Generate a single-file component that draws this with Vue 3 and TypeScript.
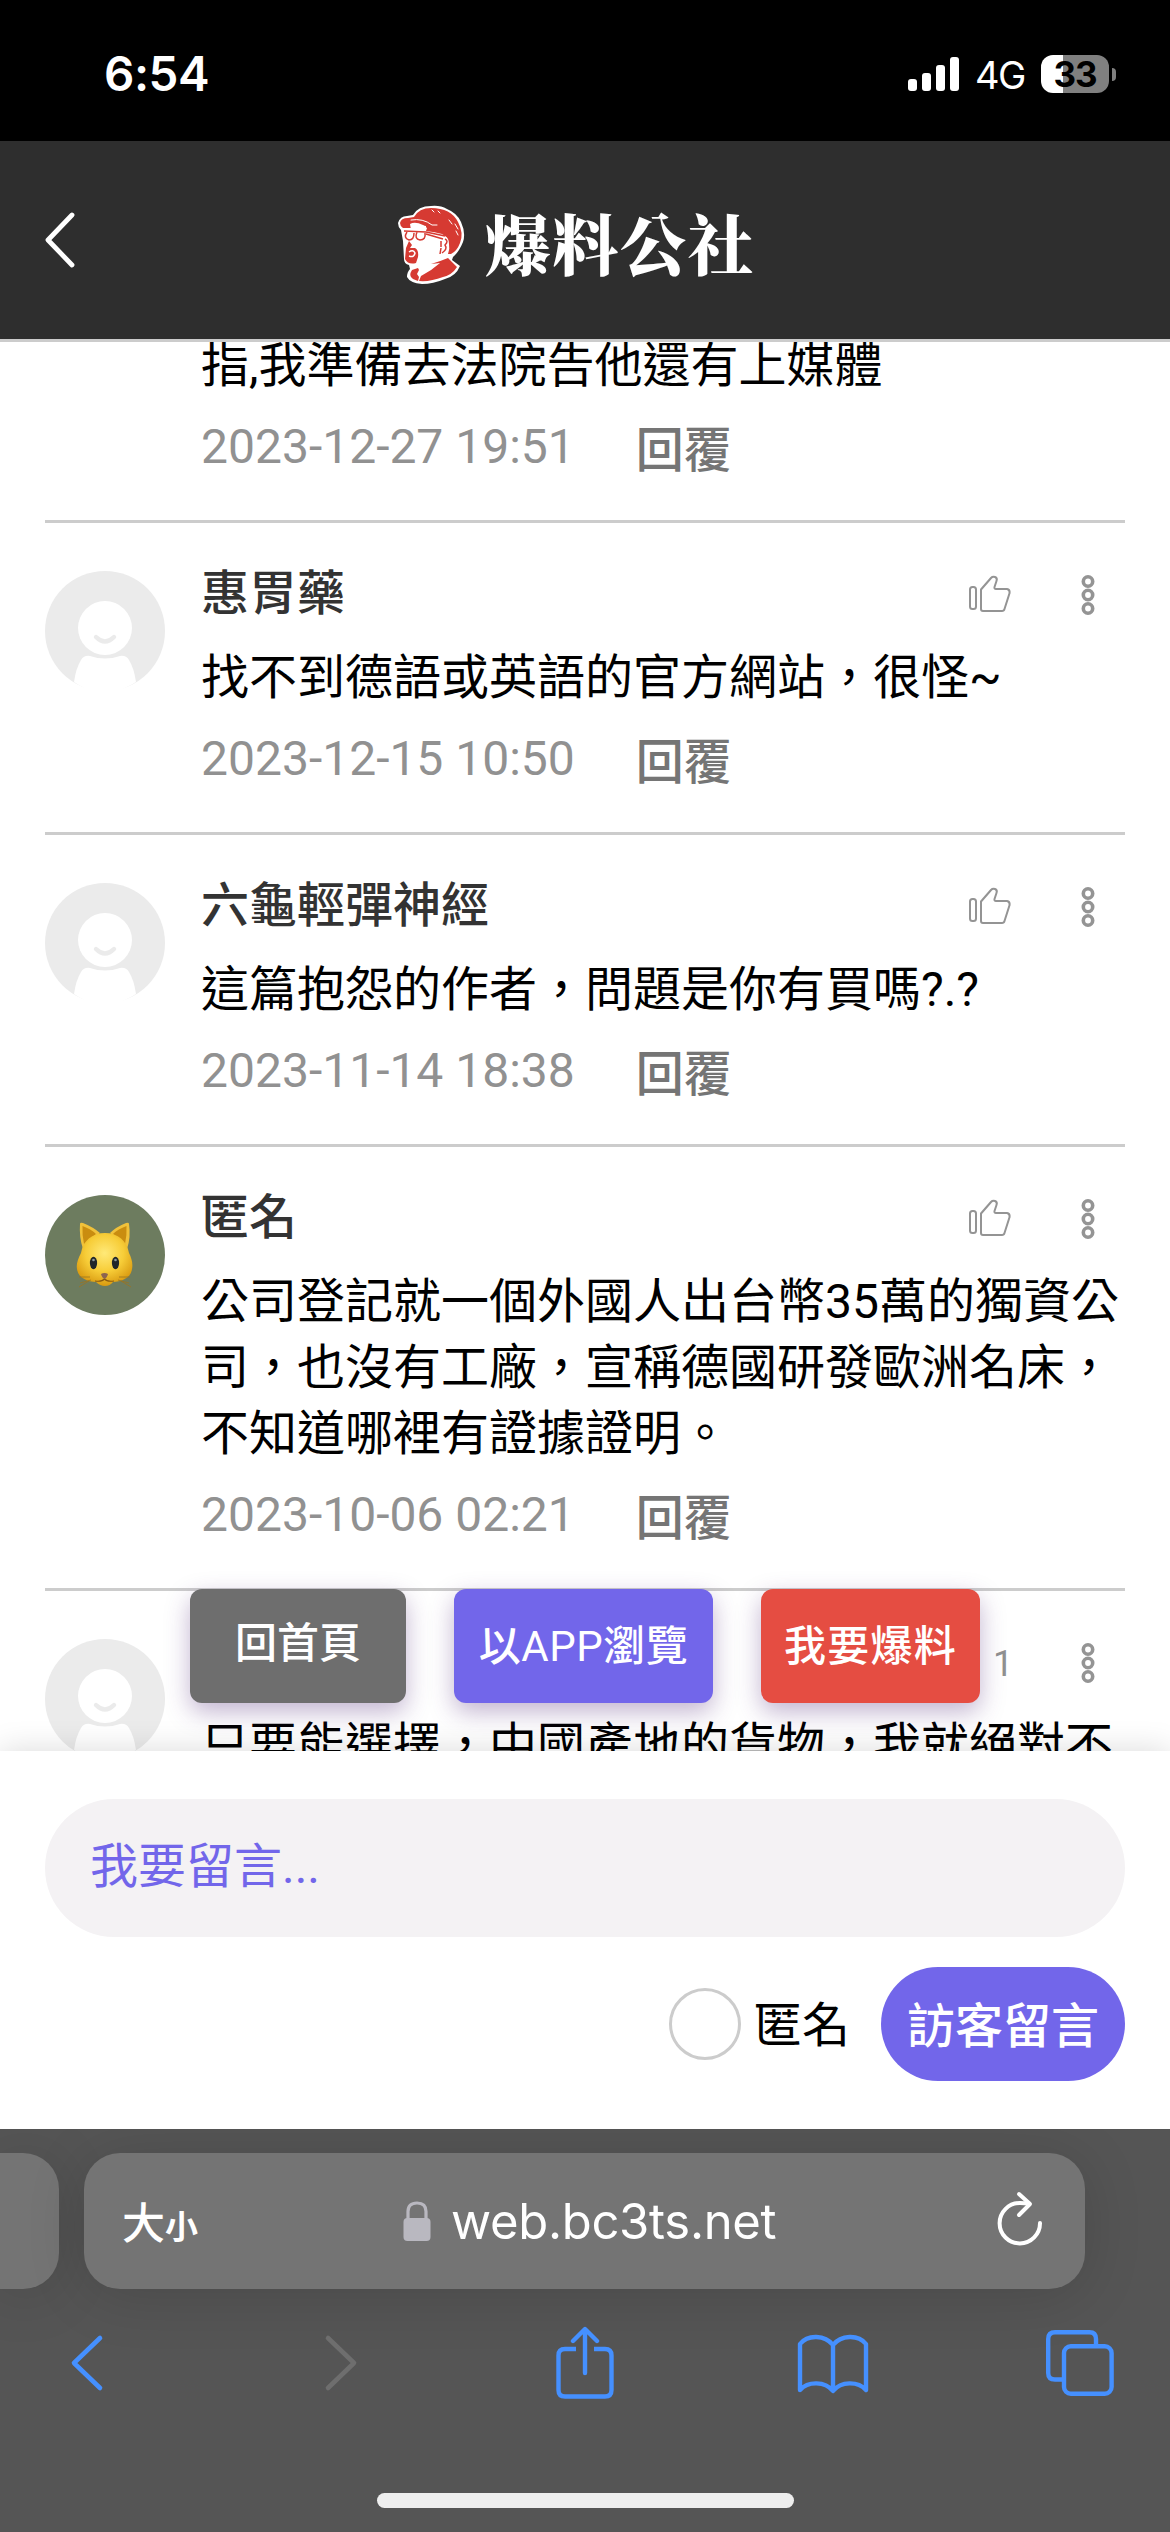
<script setup lang="ts">
interface Comment {
  id: number
  name?: string
  avatar?: 'default' | 'cat'
  text: string
  date: string
  likes?: number
}

const comments: Comment[] = [
  { id: 1, text: '指,我準備去法院告他還有上媒體', date: '2023-12-27 19:51' },
  { id: 2, name: '惠胃藥', avatar: 'default', text: '找不到德語或英語的官方網站，很怪~', date: '2023-12-15 10:50' },
  { id: 3, name: '六龜輕彈神經', avatar: 'default', text: '這篇抱怨的作者，問題是你有買嗎?.?', date: '2023-11-14 18:38' },
  { id: 4, name: '匿名', avatar: 'cat', text: '公司登記就一個外國人出台幣35萬的獨資公司，也沒有工廠，宣稱德國研發歐洲名床，不知道哪裡有證據證明。', date: '2023-10-06 02:21' },
  { id: 5, name: '', avatar: 'default', text: '只要能選擇，中國產地的貨物，我就絕對不', date: '', likes: 1 },
]

const signalBars = [12, 18, 26, 34]
</script>

<template>
  <div class="screen">
    <div class="status">
      <span class="time">6:54</span>
      <div class="signal">
        <i v-for="h in signalBars" :key="h" :style="{ height: h + 'px' }"></i>
      </div>
      <span class="network">4G</span>
      <div class="battery"><span>33</span></div>
      <i class="battery-tip"></i>
    </div>

    <header class="header">
      <svg class="back" width="34" height="58" viewBox="0 0 34 58">
        <path d="M29 4 L5 29 L29 54" fill="none" stroke="#fff" stroke-width="4.8" stroke-linecap="round" stroke-linejoin="round" />
      </svg>
      <div class="brand">
        <svg width="72" height="84" viewBox="0 0 72 84">
          <path d="M3 20Q5 13 12 13L18 12Q23 3 36 3Q45 2 52 6Q62 10 66 19Q71 30 68 39Q64 49 58 54L57 57L65 63Q61 73 50 76Q38 81 27 81Q15 80 12 74Q12 69 15 66L14 62Q9 61 9 56L8 38L6 27Q3 24 3 20Z" fill="#fff" />
          <path d="M5 20Q6 15 13 15L19 14Q24 5 36 5Q56 5 63 19Q69 30 65 40Q62 48 56 51L53 51Q55 46 54 41Q54 35 50 33L47 31Q40 29 31 28L31 23Q20 20 16 25L8 25Q5 23 5 20Z" fill="#d63a32" />
          <path d="M16 17Q28 15 37 22L42 22M37 7L39 9M43 8L45 10M60 21L63 26M61 28L63 32M54 17L57 21" fill="none" stroke="#fff" stroke-width="1" stroke-linecap="round" />
          <path d="M15 21Q20 18 28 22L32 25L31 28L16 27Z" fill="#fff" />
          <path d="M9 28L31 29L50 33M12 29Q8 35 14 37Q19 37 19 30M22 29Q19 36 25 37Q31 37 30 30M31 31L48 36" fill="none" stroke="#d63a32" stroke-width="1.5" />
          <path d="M14 38L11 45L10 56Q13 62 21 60L23 54Q24 47 20 45L15 45L17 42Z" fill="#d63a32" />
          <path d="M14 49Q18 46 20 50Q19 55 14 53" fill="none" stroke="#fff" stroke-width="1.5" />
          <path d="M50 36Q54 38 50 42Q53 46 47 50M46 38V44M46 45L45 51" fill="none" stroke="#d63a32" stroke-width="1.5" />
          <path d="M53 55L62 64Q57 72 48 74Q35 79 24 78L26 73Q36 68 45 60L36 61Q46 58 53 55ZM23 65L17 67Q13 73 18 76L23 78L24 74L22 71L24 67Z" fill="#d63a32" />
        </svg>
        <span class="brand-name">爆料公社</span>
      </div>
    </header>

    <main class="thread">
      <div class="list">
        <article v-for="c in comments" :key="c.id" class="item" :class="{ clipped: !c.avatar }">
          <svg v-if="c.avatar === 'default'" class="avatar" width="120" height="120" viewBox="0 0 120 120">
            <circle cx="60" cy="60" r="60" fill="#ebebeb" />
            <circle cx="60" cy="57" r="27" fill="#fff" />
            <path d="M51 66Q60 75 69 66" fill="none" stroke="#ebebeb" stroke-width="4.4" stroke-linecap="round" />
            <path d="M29 111Q31 97 36 89Q39 84 45 85Q60 90 75 85Q81 84 84 89Q89 97 91 111Q76 121 60 121Q43 121 29 111Z" fill="#fff" />
          </svg>
          <svg v-else-if="c.avatar === 'cat'" class="avatar" width="120" height="120" viewBox="0 0 120 120">
            <defs>
              <radialGradient id="fur" cx="50%" cy="38%" r="62%">
                <stop offset="0" stop-color="#ffe978" />
                <stop offset=".55" stop-color="#f7cd38" />
                <stop offset="1" stop-color="#d99a10" />
              </radialGradient>
            </defs>
            <circle cx="60" cy="60" r="60" fill="#6d7c5f" />
            <path d="M35 29Q35 27 38 28Q48 32 55 38L38 54Q34 42 35 29ZM84 29Q84 27 81 28Q71 32 65 38L82 54Q86 42 84 29Z" fill="#f0c13a" />
            <path d="M37.500 31Q46 34 51 39L39 49Q37 40 37.500 31ZM81.500 31Q73 34 68 39L80 49Q82 40 81.500 31Z" fill="#c98d10" />
            <path d="M60 38C73 38 82 46 84 58C87 64 88 69 87 74C86 83 76 87 68 87Q65 91 60 91Q55 91 51 87C43 87 33 83 32 74C31 69 33 64 36 58C38 46 47 38 60 38Z" fill="url(#fur)" />
            <ellipse cx="48.500" cy="68" rx="3.600" ry="6.200" fill="#20262a" />
            <ellipse cx="70.500" cy="68" rx="3.600" ry="6.200" fill="#20262a" />
            <circle cx="48.500" cy="65" r="1.300" fill="#8b979d" />
            <circle cx="70.500" cy="65" r="1.300" fill="#8b979d" />
            <path d="M56 79Q59.500 77 63 79Q62 83 59.500 84Q57 83 56 79Z" fill="#8c6450" />
            <path d="M59.500 84Q57 87 50 86M59.500 84Q62 87 69 86" fill="none" stroke="#8a5a10" stroke-width="1.200" />
            <path d="M45 82L34 82M46 85L35 88M74 82L85 82M73 85L84 88M44 86L34 92M76 86L86 92" stroke="#9b7420" stroke-width=".8" />
          </svg>

          <div class="body">
            <div v-if="c.avatar" class="head">
              <span class="name">{{ c.name }}</span>
              <span v-if="c.likes" class="likes">{{ c.likes }}</span>
              <svg v-else class="thumb" width="44" height="40" viewBox="0 0 44 40">
                <rect x="2" y="13" width="6" height="22" rx="2.500" fill="none" stroke="#949494" stroke-width="2" />
                <path d="M13 15.500L23 4Q24.500 2.400 27 3Q29.600 4 28.500 7L26.500 13Q26 15 28 15L39 15Q42 15.500 41.600 19L36.500 35Q36 37 34 37L15 37Q13 37 13 35Z" fill="none" stroke="#949494" stroke-width="2" stroke-linejoin="round" />
              </svg>
              <svg class="dots" width="14" height="42" viewBox="0 0 14 42">
                <g fill="none" stroke="#949494" stroke-width="3.600">
                  <circle cx="7" cy="7.500" r="4.700" />
                  <circle cx="7" cy="21" r="4.700" />
                  <circle cx="7" cy="34.500" r="4.700" />
                </g>
              </svg>
            </div>
            <p class="text">{{ c.text }}</p>
            <div v-if="c.date" class="meta">
              <time>{{ c.date }}</time>
              <span class="reply">回覆</span>
            </div>
          </div>
        </article>
      </div>

      <nav class="floating">
        <button class="fab home">回首頁</button>
        <button class="fab app">以<span class="latin">APP</span>瀏覽</button>
        <button class="fab report">我要爆料</button>
      </nav>
    </main>

    <section class="composer">
      <div class="field">我要留言...</div>
      <div class="actions">
        <i class="radio"></i>
        <span class="anon">匿名</span>
        <button class="send">訪客留言</button>
      </div>
    </section>

    <footer class="browser">
      <div class="address-row">
        <div class="prev-tab"></div>
        <div class="address">
          <span class="size"><b>大</b><small>小</small></span>
          <svg class="lock" width="28" height="40" viewBox="0 0 28 40">
            <path d="M5 19V10.500Q5 2 14 2Q23 2 23 10.500V19" fill="none" stroke="#b9b8c0" stroke-width="3.200" />
            <rect x="0.500" y="17" width="27" height="23" rx="4" fill="#b9b8c0" />
          </svg>
          <span class="url">web.bc3ts.net</span>
          <svg class="reload" width="46" height="56" viewBox="0 0 46 56">
            <path d="M32 12.500L23 12A20.200 20.200 0 1 0 43 32" fill="none" stroke="#fff" stroke-width="4" stroke-linecap="round" />
            <path d="M22 3L33 13L22 24" fill="none" stroke="#fff" stroke-width="4" stroke-linecap="round" stroke-linejoin="round" />
          </svg>
        </div>
      </div>
      <div class="tools">
        <svg width="34" height="58" viewBox="0 0 34 58">
          <path d="M30 4 L4 29 L30 54" fill="none" stroke="#4590ff" stroke-width="4.600" stroke-linecap="round" stroke-linejoin="round" />
        </svg>
        <svg class="forward" width="34" height="58" viewBox="0 0 34 58">
          <path d="M4 4 L30 29 L4 54" fill="none" stroke="#6e6e6e" stroke-width="4.600" stroke-linecap="round" stroke-linejoin="round" />
        </svg>
        <svg class="share" width="58" height="74" viewBox="0 0 58 74">
          <g fill="none" stroke="#4590ff" stroke-width="4.400" stroke-linecap="round" stroke-linejoin="round">
            <path d="M20 23H9Q2.500 23 2.500 29.500V64Q2.500 70.500 9 70.500H49Q55.500 70.500 55.500 64V29.500Q55.500 23 49 23H38" stroke-linecap="butt" />
            <path d="M29 47V4M17 15L29 3L41 15" />
          </g>
        </svg>
        <svg class="bookmarks" width="72" height="62" viewBox="0 0 72 62">
          <path d="M36 13C28 3 11 2 3 12V58C11 49 28 49 36 59C44 49 61 49 69 58V12C61 2 44 3 36 13V58" fill="none" stroke="#4590ff" stroke-width="4.400" stroke-linecap="round" stroke-linejoin="round" />
        </svg>
        <svg class="tabs" width="68" height="66" viewBox="0 0 68 66">
          <g fill="none" stroke="#4590ff" stroke-width="4.400">
            <path d="M50 14V9Q50 2.200 43.500 2.200H9Q2.200 2.200 2.200 9V43Q2.200 49.500 9 49.500H16" />
            <rect x="18" y="16.300" width="47.600" height="47.500" rx="6.800" />
          </g>
        </svg>
      </div>
      <div class="home-indicator"></div>
    </footer>
  </div>
</template>

<style>
body {
  margin: 0;
  background: #fff;
}
</style>

<style scoped>
.screen {
  width: 1170px;
  height: 2532px;
  overflow: hidden;
  display: flex;
  flex-direction: column;
  font-family: Roboto, "Noto Sans CJK TC", sans-serif;
  font-size: 48px;
  line-height: 66px;
  color: #000;
  background: #fff;
}
svg {
  display: block;
  flex: none;
}
button {
  border: 0;
  padding: 0;
  font: inherit;
  color: #fff;
}

/* status bar */
.status {
  box-sizing: border-box;
  flex: none;
  height: 141px;
  padding: 7px 54px 0 104px;
  display: flex;
  align-items: center;
  background: #000;
  color: #fff;
  font-family: Inter, sans-serif;
}
.time {
  font-size: 47.500px;
  font-weight: 600;
  letter-spacing: -0.5px;
}
.signal {
  margin-left: auto;
  display: flex;
  align-items: flex-end;
  gap: 5px;
  height: 34px;
}
.signal i {
  width: 9px;
  border-radius: 3px;
  background: #fff;
}
.network {
  margin-left: 16px;
  width: 50px;
  padding-top: 2px;
  font-size: 38px;
  letter-spacing: -1.5px;
  white-space: nowrap;
}
.battery {
  margin-left: 16px;
  width: 68px;
  height: 38px;
  border-radius: 12px;
  background: linear-gradient(90deg, #fff 22px, #808080 22px);
  color: #000;
  font-size: 35px;
  line-height: 38px;
  font-weight: 700;
  letter-spacing: -1px;
  text-align: center;
}
.battery-tip {
  margin-left: 3px;
  width: 4px;
  height: 13px;
  border-radius: 0 6px 6px 0;
  background: #808080;
}

/* site header */
.header {
  flex: none;
  height: 198px;
  border-bottom: 3px solid #ccc;
  display: flex;
  align-items: center;
  padding-left: 43px;
  background: #2e2e2e;
  color: #fff;
}
.brand {
  margin-left: 318px;
  padding-top: 9px;
  display: flex;
  align-items: center;
}
.brand-name {
  margin: -6px 0 0 18px;
  font-family: "Noto Serif CJK TC", "Noto Sans CJK TC", serif;
  font-weight: 900;
  font-size: 66px;
  line-height: 84px;
  letter-spacing: 1.500px;
}

/* comments */
.thread {
  position: relative;
  flex: none;
  height: 1409px;
  overflow: hidden;
}
.list {
  padding: 0 45px;
}
.item {
  display: flex;
  gap: 36px;
  padding: 38px 0 40px;
  border-bottom: 3px solid #ccc;
}
.item.clipped {
  margin-top: -9px;
  padding-top: 0;
  padding-left: 156px;
}
.avatar {
  margin-top: 10px;
}
.body {
  flex: 1;
  min-width: 0;
}
.head {
  height: 66px;
  margin-bottom: 18px;
  display: flex;
  align-items: center;
}
.name {
  flex: 1;
  font-weight: 500;
  color: #333;
}
.likes {
  width: 88px;
  font-size: 36px;
  padding-top: 4px;
  color: #919191;
}
.thumb {
  margin: 0 69px 0 0;
}
.dots {
  margin: 2px 30px 0 0;
}
.text {
  margin: 0;
}
.meta {
  margin-top: 15px;
  height: 66px;
  display: flex;
  color: #919191;
}
.reply {
  margin-left: 61px;
  padding-top: 4px;
  font-weight: 500;
  color: #757575;
}

/* floating shortcuts over the thread */
.floating {
  position: absolute;
  left: 190px;
  bottom: 48px;
  display: flex;
  gap: 48px;
}
.fab {
  box-sizing: border-box;
  height: 114px;
  padding-top: 2px;
  border-radius: 12px;
  font-size: 42px;
  font-weight: 500;
  letter-spacing: 1.260px;
  white-space: nowrap;
  box-shadow: 0 9px 24px rgba(80, 40, 120, 0.35);
}
.home {
  width: 216px;
  padding: 0 0 4px;
  letter-spacing: 0;
  background: #6e6e6e;
}
.app {
  width: 259px;
  letter-spacing: 0.5px;
  background: #7266ea;
}
.latin {
  font-weight: 400;
}
.report {
  width: 219px;
  background: #e54d42;
}

/* composer */
.composer {
  position: relative;
  box-sizing: border-box;
  flex: none;
  height: 378px;
  padding: 48px 45px 0;
  background: #fff;
  box-shadow: 0 0 30px rgba(0, 0, 0, 0.15);
}
.field {
  box-sizing: border-box;
  height: 138px;
  border-radius: 69px;
  padding: 35px 45px;
  background: #f4f2f4;
  color: #7266ea;
}
.actions {
  margin-top: 30px;
  display: flex;
  align-items: center;
  justify-content: flex-end;
}
.radio {
  box-sizing: border-box;
  width: 72px;
  height: 72px;
  border: 3px solid #ccc;
  border-radius: 50%;
}
.anon {
  margin: 4px 31px 0 13px;
}
.send {
  width: 244px;
  height: 114px;
  padding-top: 5px;
  border-radius: 57px;
  font-weight: 500;
  background: #7266ea;
}

/* browser chrome */
.browser {
  position: relative;
  box-sizing: border-box;
  flex: 1;
  padding-top: 24px;
  display: flex;
  flex-direction: column;
  align-items: center;
  overflow: hidden;
  background: #555;
}
.address-row {
  align-self: stretch;
  display: flex;
  gap: 25px;
}
.prev-tab {
  width: 59px;
  height: 136px;
  border-radius: 0 36px 36px 0;
  background: #747474;
  box-shadow: 0 6px 60px rgba(0, 0, 0, 0.14);
}
.address {
  box-sizing: border-box;
  width: 1001px;
  height: 136px;
  padding: 2px 42px 0 38px;
  border-radius: 36px;
  display: flex;
  align-items: center;
  background: #747474;
  box-shadow: 0 6px 60px rgba(0, 0, 0, 0.14);
  color: #fff;
}
.size {
  width: 281px;
  display: flex;
  align-items: baseline;
  font-family: "Noto Sans CJK TC", sans-serif;
}
.size b {
  font-size: 43px;
  font-weight: 500;
}
.size small {
  font-size: 33px;
  font-weight: 700;
}
.lock {
  margin-top: -2px;
}
.url {
  margin-left: 20px;
  font-family: Inter, sans-serif;
  font-size: 49px;
  letter-spacing: -0.3px;
}
.reload {
  margin: -7px 0 0 auto;
}
.tools {
  box-sizing: border-box;
  width: 100%;
  height: 76px;
  margin-top: 36px;
  padding-left: 70px;
  display: flex;
  align-items: center;
}
.forward {
  margin-left: 220px;
}
.share {
  margin-left: 198px;
}
.bookmarks {
  margin-left: 183px;
}
.tabs {
  margin-left: 177px;
}
.home-indicator {
  margin-top: 92px;
  width: 417px;
  height: 15px;
  border-radius: 8px;
  background: #eee;
}
</style>
